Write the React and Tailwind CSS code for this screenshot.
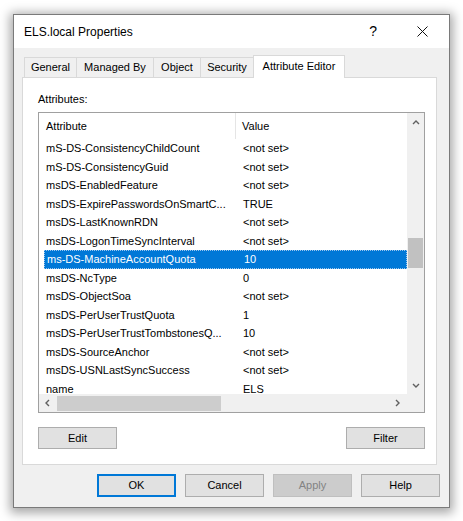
import React from 'react';

const rows = [
  ['mS-DS-ConsistencyChildCount', '<not set>'],
  ['mS-DS-ConsistencyGuid', '<not set>'],
  ['msDS-EnabledFeature', '<not set>'],
  ['msDS-ExpirePasswordsOnSmartC...', 'TRUE'],
  ['msDS-LastKnownRDN', '<not set>'],
  ['msDS-LogonTimeSyncInterval', '<not set>'],
  ['ms-DS-MachineAccountQuota', '10', true],
  ['msDS-NcType', '0'],
  ['msDS-ObjectSoa', '<not set>'],
  ['msDS-PerUserTrustQuota', '1'],
  ['msDS-PerUserTrustTombstonesQ...', '10'],
  ['msDS-SourceAnchor', '<not set>'],
  ['msDS-USNLastSyncSuccess', '<not set>'],
  ['name', 'ELS'],
];

const tabs = [
  ['General', 'w-[53px]'],
  ['Managed By', 'w-[78px]'],
  ['Object', 'w-[48px]'],
  ['Security', 'w-[54px]'],
];

function Chevron({ dir }) {
  const pts = {
    up: '1,5 4,2 7,5',
    down: '1,2 4,5 7,2',
    left: '5,1 2,4 5,7',
    right: '2,1 5,4 2,7',
  }[dir];
  return (
    <svg width="8" height="8" viewBox="0 0 8 8">
      <polyline points={pts} fill="none" stroke="#606060" strokeWidth="1.4" />
    </svg>
  );
}

const tones = {
  normal: 'border border-[#adadad] bg-[#e1e1e1] text-black',
  default: 'border-2 border-[#0078d7] bg-[#e1e1e1] text-black',
  disabled: 'border border-[#bfbfbf] bg-[#cccccc] text-[#838383]',
};

function Btn({ children, tone = 'normal', h = 'h-[23px]' }) {
  return (
    <div className={`flex w-[79px] items-center justify-center text-[11px] ${h} ${tones[tone]}`}>
      {children}
    </div>
  );
}

export default function App() {
  return (
    <div className="h-[521px] w-[463px] overflow-hidden bg-white pl-[13px] pt-[14px] font-['Liberation_Sans',Arial,sans-serif]">
      <div className="flex h-[494px] w-[437px] flex-col border border-[#7a7a7a] bg-[#f0f0f0] shadow-[0_2px_10px_3px_rgba(0,0,0,0.35)]">
        {/* title bar */}
        <div className="flex h-[33px] items-center bg-white pl-[10px]">
          <span className="text-[12px] text-black">ELS.local Properties</span>
          <span className="ml-auto mr-[40px] text-[14px] text-black">?</span>
          <svg width="11" height="11" viewBox="0 0 11 11" className="mr-[21px]">
            <path d="M0.5 0.5 L10.5 10.5 M10.5 0.5 L0.5 10.5" stroke="#111" strokeWidth="1" />
          </svg>
        </div>

        {/* tabs */}
        <div className="relative z-10 flex h-[29px] items-end pl-[10px]">
          {tabs.map(([t, w]) => (
            <div
              key={t}
              className={`-mr-px flex h-[20px] items-center justify-center border border-b-0 border-[#d9d9d9] bg-[#f0f0f0] text-[11px] text-black ${w}`}
            >
              {t}
            </div>
          ))}
          <div className="-mb-px flex h-[23px] w-[92px] items-center justify-center border border-b-0 border-[#d9d9d9] bg-white pb-[2px] text-[11px] text-black">
            Attribute Editor
          </div>
        </div>

        {/* panel */}
        <div className="ml-[8px] flex h-[388px] w-[415px] flex-col border border-[#d9d9d9] bg-white pl-[15px] pr-[11px]">
          <div className="mt-[15px] text-[11px] leading-[13px] text-black">Attributes:</div>
          <div className="mt-[6px] flex h-[301px] w-[387px] flex-col border border-[#a0a0a0] bg-white">
            <div className="flex h-[281px]">
              <div className="flex-1 overflow-hidden">
                <div className="flex h-[26px] items-center text-[11px] text-black">
                  <div className="flex h-full w-[197px] items-center border-r border-[#e5e5e5] pl-[7px]">Attribute</div>
                  <div className="pl-[6px]">Value</div>
                </div>
                {rows.map(([a, v, sel]) => (
                  <div
                    key={a}
                    className={`ml-[5px] flex h-[18.5px] items-center whitespace-nowrap text-[11px] ${
                      sel ? 'border border-dotted border-[#9cc6ee] bg-[#0078d7] text-white' : 'text-black'
                    }`}
                  >
                    <div className="w-[192px] overflow-hidden pl-[2px]">{a}</div>
                    <div className="pl-[7px]">{v}</div>
                  </div>
                ))}
              </div>
              <div className="flex w-[17px] flex-col items-center bg-[#f0f0f0]">
                <div className="flex h-[17px] items-center pt-[2px]"><Chevron dir="up" /></div>
                <div className="mt-[108px] h-[30px] w-[15px] bg-[#c1c1c1]" />
                <div className="mt-auto flex h-[17px] items-center"><Chevron dir="down" /></div>
              </div>
            </div>
            <div className="flex h-[18px]">
              <div className="flex flex-1 items-center bg-[#f0f0f0]">
                <div className="flex w-[18px] justify-center"><Chevron dir="left" /></div>
                <div className="h-[15px] w-[164px] bg-[#cdcdcd]" />
                <div className="ml-auto flex w-[18px] justify-center"><Chevron dir="right" /></div>
              </div>
              <div className="w-[17px] bg-[#f0f0f0]" />
            </div>
          </div>
          <div className="mt-[14px] flex justify-between">
            <Btn h="h-[22px]">Edit</Btn>
            <Btn h="h-[22px]">Filter</Btn>
          </div>
        </div>

        {/* dialog buttons */}
        <div className="mt-[9px] flex justify-end gap-[9px] pr-[9px]">
          <Btn tone="default">OK</Btn>
          <Btn>Cancel</Btn>
          <Btn tone="disabled">Apply</Btn>
          <Btn>Help</Btn>
        </div>
      </div>
    </div>
  );
}
